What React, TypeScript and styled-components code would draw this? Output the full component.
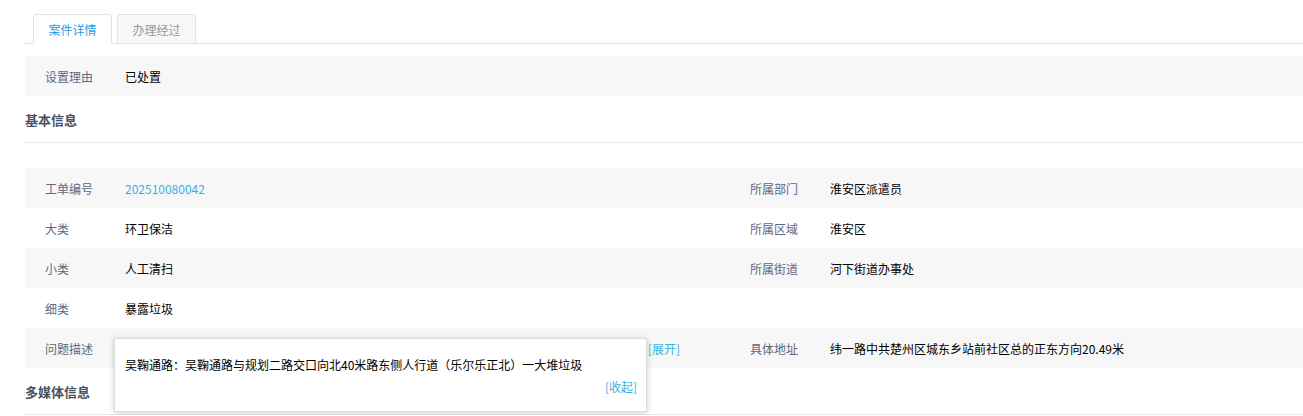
import React from 'react'
import styled, { createGlobalStyle } from 'styled-components'

const GlobalStyle = createGlobalStyle`
  html, body {
    margin: 0;
    padding: 0;
    background: #fff;
    overflow: hidden;
  }
  body {
    font-family: "Noto Sans CJK SC", "Microsoft YaHei", "Liberation Sans", sans-serif;
    font-size: 12px;
    color: #000;
  }
`

const Page = styled.div`
  padding: 14px 0 0 25px;
`

const TabBar = styled.div`
  display: flex;
  gap: 5px;
  margin-left: -2px;
  padding-left: 10px;
  border-bottom: 1px solid #e3e3e3;
  height: 29px;
`

const Tab = styled.div<{ $active?: boolean }>`
  width: 79px;
  box-sizing: border-box;
  display: flex;
  align-items: center;
  justify-content: center;
  border: 1px solid #e3e3e3;
  border-bottom: none;
  border-radius: 4px 4px 0 0;
  background: ${(p) => (p.$active ? '#fff' : '#f7f7f7')};
  color: ${(p) => (p.$active ? '#1f9fe6' : '#999')};
  font-size: 12px;
  margin-bottom: ${(p) => (p.$active ? '-1px' : '0')};
  height: ${(p) => (p.$active ? '30px' : '29px')};
`

const ReasonRow = styled.div`
  margin-top: 12px;
  height: 40px;
  background: #f7f7f7;
  display: flex;
  align-items: center;
`

const SectionTitle = styled.div<{ $gap: number }>`
  height: 46px;
  display: flex;
  align-items: center;
  font-size: 13px;
  font-weight: bold;
  color: #495060;
  border-bottom: 1px solid #e8e8e8;
  margin-bottom: ${(p) => p.$gap}px;
`

const Grid = styled.div`
  display: grid;
  grid-template-columns: 705px 1fr;
`

const Cell = styled.div<{ $shade: boolean }>`
  position: relative;
  height: 40px;
  display: flex;
  align-items: center;
  background: ${(p) => (p.$shade ? '#f7f7f7' : '#fff')};
`

const Label = styled.span`
  width: 80px;
  padding-left: 20px;
  flex-shrink: 0;
  color: #5e6880;
`

const Value = styled.span<{ $link?: boolean }>`
  color: ${(p) => (p.$link ? '#3ab0e2' : '#000')};
  white-space: nowrap;
`

const Clipped = styled.span`
  width: 520px;
  overflow: hidden;
  white-space: nowrap;
  text-overflow: ellipsis;
  color: #000;
`

const More = styled.span`
  color: #3ab0e2;
  margin-left: 3px;
  cursor: pointer;
`

const Popover = styled.div`
  position: absolute;
  left: 89px;
  top: 10px;
  width: 533px;
  height: 74px;
  box-sizing: border-box;
  background: #fff;
  border: 1px solid #dcdcdc;
  box-shadow: 0 1px 6px rgba(0, 0, 0, 0.2);
  padding: 18px 9px 0 10px;
  display: flex;
  flex-direction: column;
  z-index: 5;
`

const PopText = styled.div`
  line-height: 16px;
  color: #000;
`

const PopAction = styled.div`
  align-self: flex-end;
  margin-top: 6px;
  line-height: 16px;
  color: #3ab0e2;
  cursor: pointer;
`

const desc =
  '吴鞠通路：吴鞠通路与规划二路交口向北40米路东侧人行道（乐尔乐正北）一大堆垃圾'

type Item = { label: string; value?: string; link?: boolean }

const rows: [Item, Item | null][] = [
  [
    { label: '工单编号', value: '202510080042', link: true },
    { label: '所属部门', value: '淮安区派遣员' },
  ],
  [
    { label: '大类', value: '环卫保洁' },
    { label: '所属区域', value: '淮安区' },
  ],
  [
    { label: '小类', value: '人工清扫' },
    { label: '所属街道', value: '河下街道办事处' },
  ],
  [{ label: '细类', value: '暴露垃圾' }, null],
]

export default function App() {
  return (
    <>
      <GlobalStyle />
      <Page>
        <TabBar>
          <Tab $active>案件详情</Tab>
          <Tab>办理经过</Tab>
        </TabBar>
        <ReasonRow>
          <Label>设置理由</Label>
          <Value>已处置</Value>
        </ReasonRow>
        <SectionTitle $gap={25}>基本信息</SectionTitle>
        <Grid>
          {rows.map(([left, right], i) => (
            <React.Fragment key={left.label}>
              <Cell $shade={i % 2 === 0}>
                <Label>{left.label}</Label>
                <Value $link={left.link}>{left.value}</Value>
              </Cell>
              <Cell $shade={i % 2 === 0}>
                {right && (
                  <>
                    <Label>{right.label}</Label>
                    <Value>{right.value}</Value>
                  </>
                )}
              </Cell>
            </React.Fragment>
          ))}
          <Cell $shade>
            <Label>问题描述</Label>
            <Clipped>{desc}</Clipped>
            <More>[展开]</More>
            <Popover>
              <PopText>{desc}</PopText>
              <PopAction>[收起]</PopAction>
            </Popover>
          </Cell>
          <Cell $shade>
            <Label>具体地址</Label>
            <Value>纬一路中共楚州区城东乡站前社区总的正东方向20.49米</Value>
          </Cell>
        </Grid>
        <SectionTitle $gap={0}>多媒体信息</SectionTitle>
      </Page>
    </>
  )
}
